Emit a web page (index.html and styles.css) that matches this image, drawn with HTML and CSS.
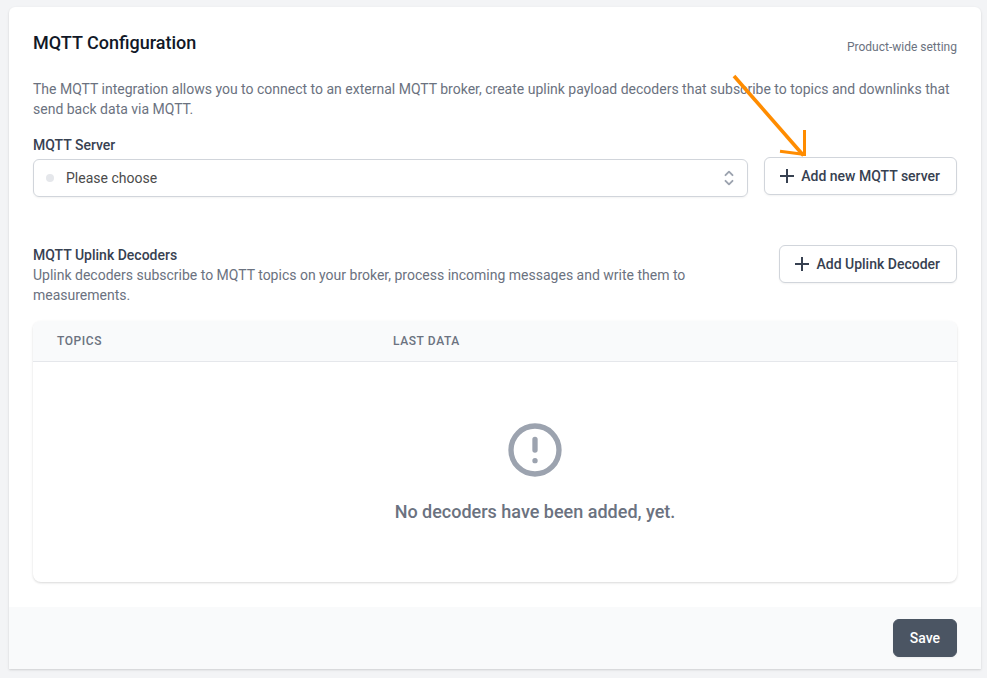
FILE: index.html
```html
<!DOCTYPE html>
<html lang="en">
<head>
<meta charset="utf-8">
<title>MQTT Configuration</title>
<link rel="stylesheet" href="styles.css">
</head>
<body>
<main class="card">
  <div class="card-body">
    <header class="card-header">
      <h1 class="title">MQTT Configuration</h1>
      <span class="scope">Product-wide setting</span>
    </header>
    <p class="text intro">The MQTT integration allows you to connect to an external MQTT broker, create uplink payload decoders that subscribe to topics and downlinks that send back data via MQTT.</p>
    <section class="server">
      <div class="field">
        <div class="label">MQTT Server</div>
        <div class="select">
          <span class="dot"></span>
          <span class="value">Please choose</span>
          <svg class="chevrons" viewBox="0 0 20 20" fill="none" stroke="currentColor" stroke-width="1.9" stroke-linecap="round" stroke-linejoin="round"><path d="M6.500 7.200L10 3.700l3.500 3.500M13.500 12.800L10 16.300l-3.500-3.500"/></svg>
        </div>
      </div>
      <div class="add-server">
        <button class="button" type="button"><svg class="plus" viewBox="0 0 20 20" fill="none" stroke="currentColor" stroke-width="2"><path d="M10 3v14M3 10h14"/></svg>Add new MQTT server</button>
        <svg class="arrow" viewBox="0 0 80 90" fill="none" stroke="#ff8c00" stroke-width="3"><path d="M4 6L73.500 85.500" stroke-width="3.600"/><path d="M74.500 60V86M50 81.200L73 84.200"/></svg>
      </div>
    </section>
    <section class="decoders">
      <div class="decoders-copy">
        <h2 class="label">MQTT Uplink Decoders</h2>
        <p class="text">Uplink decoders subscribe to MQTT topics on your broker, process incoming messages and write them to measurements.</p>
      </div>
      <button class="button" type="button"><svg class="plus" viewBox="0 0 20 20" fill="none" stroke="currentColor" stroke-width="2"><path d="M10 3v14M3 10h14"/></svg>Add Uplink Decoder</button>
    </section>
    <section class="table">
      <div class="table-head"><span>Topics</span><span>Last data</span></div>
      <div class="empty">
        <svg class="empty-icon" viewBox="0 0 24 24" fill="none" stroke="currentColor" stroke-width="2" stroke-linecap="round" stroke-linejoin="round"><path d="M12 8v4m0 4h.01M21 12a9 9 0 11-18 0 9 9 0 0118 0z"/></svg>
        <p class="empty-text">No decoders have been added, yet.</p>
      </div>
    </section>
  </div>
  <footer class="card-footer"><button class="button save" type="button">Save</button></footer>
</main>
</body>
</html>
```
FILE: styles.css
```css
* { box-sizing: border-box; }

body {
  margin: 0;
  padding: 7px 6px 9px 9px;
  background: #f3f4f6;
  font-family: Roboto, "Liberation Sans", sans-serif;
  font-size: 14px;
  line-height: 20px;
  color: #374151;
}

h1, h2, p { margin: 0; }
svg { display: block; flex: none; }

.card {
  background: #fff;
  border-radius: 6px 6px 0 0;
  box-shadow: 0 1px 3px rgba(0, 0, 0, .1), 0 1px 2px rgba(0, 0, 0, .06);
}

.card-body { padding: 24px 24px 25px; }

.card-header {
  display: flex;
  justify-content: space-between;
}

.title {
  font-size: 18px;
  line-height: 24px;
  font-weight: 500;
  color: #111827;
}

.scope {
  padding-top: 8px;
  font-size: 12px;
  line-height: 16px;
  color: #6b7280;
}

.text { color: #6b7280; }
.intro { margin-top: 24px; }

.label {
  font-size: 14px;
  line-height: 20px;
  font-weight: 500;
  color: #374151;
}

.server {
  display: flex;
  gap: 16px;
  margin-top: 16px;
}

.field { flex: 1; }

.select {
  display: flex;
  align-items: center;
  height: 38px;
  margin-top: 4px;
  padding: 0 8px 0 12px;
  border: 1px solid #d1d5db;
  border-radius: 6px;
  box-shadow: 0 1px 2px rgba(0, 0, 0, .05);
}

.dot {
  width: 8px;
  height: 8px;
  border-radius: 50%;
  background: #e5e7eb;
}

.value {
  flex: 1;
  margin-left: 12px;
  color: #4b4b4b;
}

.chevrons {
  width: 20px;
  height: 20px;
  color: #9ca3af;
}

.add-server {
  position: relative;
  padding-top: 22px;
}

.button {
  display: flex;
  align-items: center;
  flex: none;
  height: 38px;
  padding: 0 16px 0 12px;
  border: 1px solid #d1d5db;
  border-radius: 6px;
  background: #fff;
  box-shadow: 0 1px 2px rgba(0, 0, 0, .05);
  font: 500 14px/20px Roboto, "Liberation Sans", sans-serif;
  color: #374151;
  white-space: nowrap;
}

.plus {
  width: 20px;
  height: 20px;
  margin-right: 4px;
}

/* Annotation pointing at the server button */
.arrow {
  position: absolute;
  left: -34px;
  top: -65px;
  width: 80px;
  height: 90px;
  pointer-events: none;
}

.decoders {
  display: flex;
  align-items: flex-start;
  justify-content: space-between;
  margin-top: 48px;
}

.decoders-copy { width: 672px; }

.table {
  height: 261px;
  margin-top: 16px;
  border-radius: 8px;
  overflow: hidden;
  box-shadow: 0 1px 3px rgba(0, 0, 0, .1), 0 1px 2px rgba(0, 0, 0, .06);
}

.table-head {
  display: grid;
  grid-template-columns: 336px 1fr;
  padding: 12px 24px;
  border-bottom: 1px solid #e5e7eb;
  background: #f9fafb;
  font-size: 12px;
  line-height: 16px;
  font-weight: 500;
  letter-spacing: .6px;
  text-transform: uppercase;
  color: #6b7280;
}

.empty {
  display: flex;
  flex-direction: column;
  align-items: center;
  padding: 56px 0 0 80px;
}

.empty-icon {
  width: 64px;
  height: 64px;
  color: #9ca3af;
}

.empty-text {
  margin-top: 16px;
  font-size: 18px;
  line-height: 28px;
  font-weight: 500;
  color: #6b7280;
}

.card-footer {
  display: flex;
  justify-content: flex-end;
  padding: 12px 24px;
  background: #f9fafb;
}

.save {
  padding: 0 16px;
  border-color: #4b5563;
  background: #4b5563;
  color: #fff;
}
```
